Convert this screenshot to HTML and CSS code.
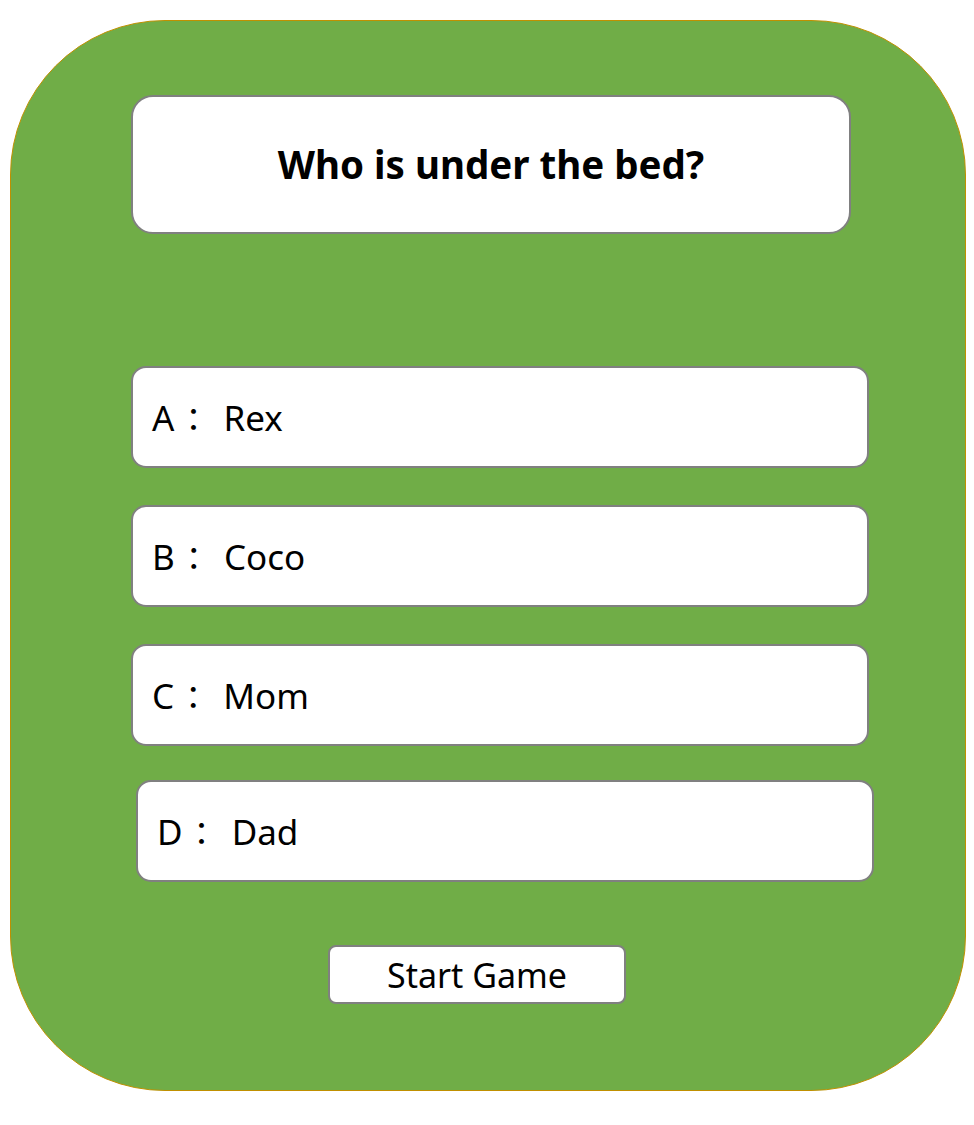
FILE: index.html
```html
<!DOCTYPE html>
<html>
<head>
<meta charset="utf-8">
<link rel="stylesheet" href="styles.css">
</head>
<body>
<div class="panel">
  <div class="question">Who is under the bed?</div>
  <div class="option opt-a">A<span class="colon">：</span> Rex</div>
  <div class="option">B<span class="colon">：</span> Coco</div>
  <div class="option">C<span class="colon">：</span> Mom</div>
  <div class="option opt-d">D<span class="colon">：</span> Dad</div>
  <div class="start">Start Game</div>
</div>
</body>
</html>
```

FILE: styles.css
```css
* { box-sizing: border-box; }
html, body { margin: 0; padding: 0; background: #fff; }
body { font-family: "Noto Sans", "Noto Sans CJK JP", sans-serif; color: #000; }

.panel {
  margin: 20px 0 0 10px;
  width: 956px;
  height: 1071px;
  background: #70ad47;
  border: 1px solid #c09000;
  border-radius: 155px;
  display: flex;
  flex-direction: column;
  align-items: flex-start;
  padding: 74px 0 0 120px;
}

.question {
  width: 720px;
  height: 139px;
  background: #fff;
  border: 2px solid #808080;
  border-radius: 22px;
  display: flex;
  align-items: center;
  justify-content: center;
  font-weight: 700;
  font-size: 38.5px;
  padding-bottom: 2px;
}

.option {
  width: 738px;
  height: 102px;
  background: #fff;
  border: 2px solid #808080;
  border-radius: 15px;
  display: flex;
  align-items: center;
  padding-left: 19px;
  font-size: 35px;
  margin-top: 37px;
  white-space: pre;
}

.colon {
  font-family: "Noto Sans CJK JP", sans-serif;
  font-size: 32px;
  margin: 0 5px 0 3px;
}

.opt-a { margin-top: 132px; }
.opt-d { margin-top: 34px; margin-left: 5px; }

.start {
  margin-top: 63px;
  margin-left: 197px;
  width: 298px;
  height: 59px;
  background: #fff;
  border: 2px solid #808080;
  border-radius: 8px;
  display: flex;
  align-items: center;
  justify-content: center;
  font-size: 34px;
}
```
